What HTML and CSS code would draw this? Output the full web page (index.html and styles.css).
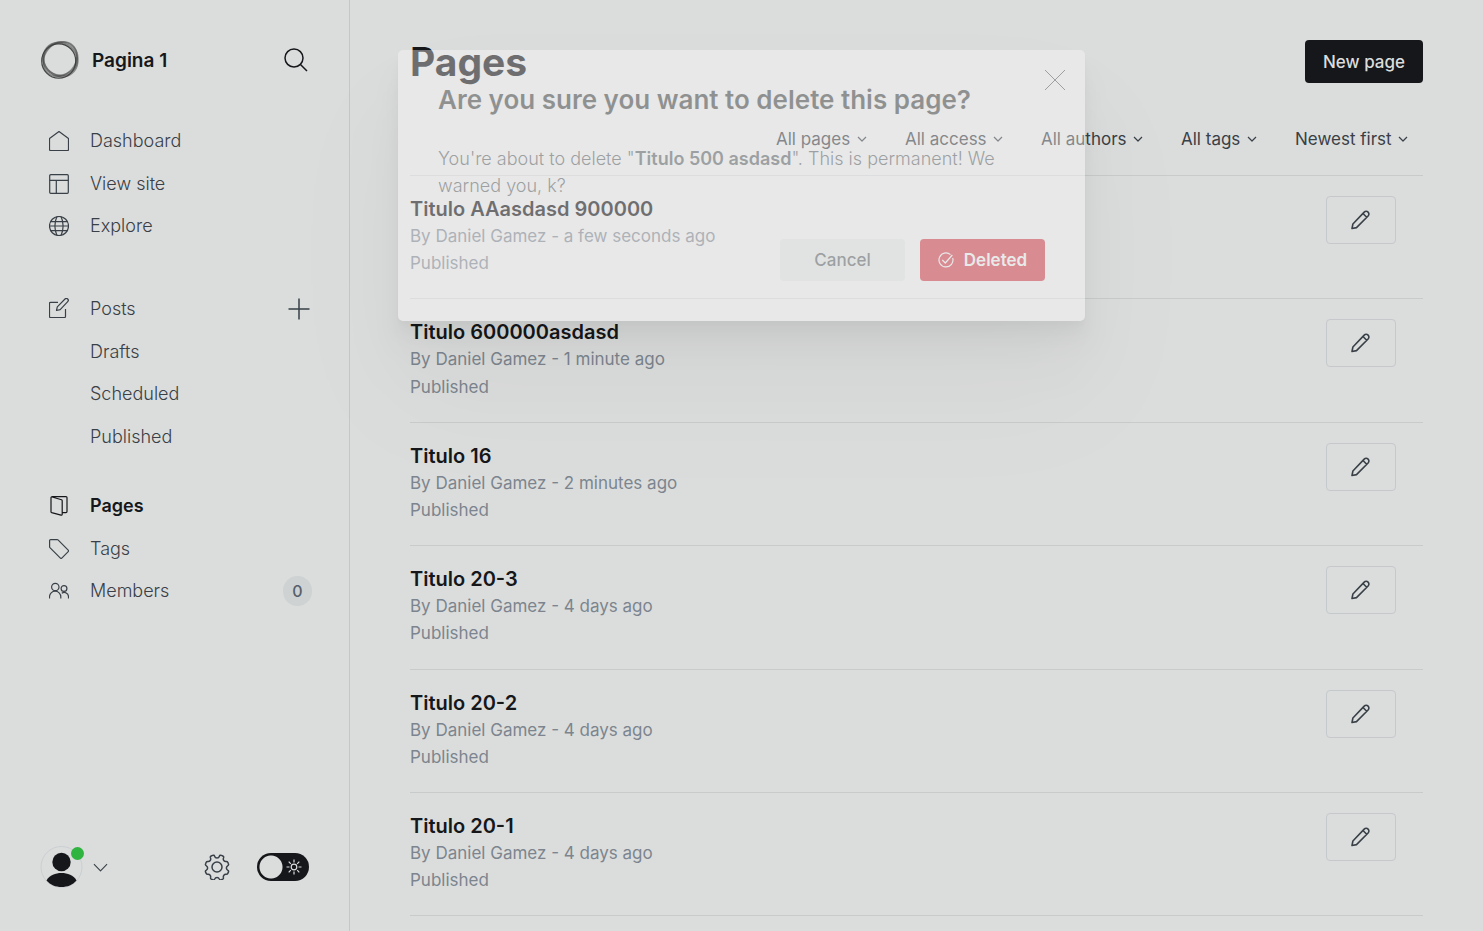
FILE: index.html
```html
<!DOCTYPE html>
<html lang="en">
<head>
<meta charset="utf-8">
<meta name="viewport" content="width=device-width, initial-scale=1">
<title>Pages - Pagina 1</title>
<link rel="stylesheet" href="styles.css">
</head>
<body>
<svg class="sprite" aria-hidden="true">
  <symbol id="pencil" viewBox="0 0 20 20"><path d="M1 18.500l.9-4.500L13.200 2.100a2.700 2.700 0 0 1 3.900 3.900L5.500 17.600zM12 3.500l3.700 3.700"/></symbol>
  <symbol id="chevron" viewBox="0 0 10 6"><path d="M1 1l4 4 4-4"/></symbol>
</svg>
<div class="app">
  <aside class="sidebar">
    <header class="brand">
      <svg class="brand-logo" viewBox="0 0 40 40" fill="none" aria-hidden="true">
        <ellipse cx="18.700" cy="21" rx="17" ry="17.200" stroke="#222" stroke-opacity=".8" stroke-width="1.200"/>
        <ellipse cx="20.800" cy="19.500" rx="18.500" ry="15.500" transform="rotate(-48 20 20)" stroke="#333" stroke-opacity=".5" stroke-width="1.600"/>
        <ellipse cx="20" cy="19.500" rx="17.800" ry="16" transform="rotate(40 20 20)" stroke="#333" stroke-opacity=".5" stroke-width="2"/>
        <ellipse cx="21" cy="19" rx="17.200" ry="16.500" transform="rotate(-20 20 20)" stroke="#444" stroke-opacity=".45" stroke-width="2"/>
      </svg>
      <span class="brand-name">Pagina 1</span>
      <button class="icon-button" type="button" aria-label="Search">
        <svg class="icon-search" viewBox="0 0 24 24"><circle cx="10" cy="10" r="9"/><path d="M16.500 16.500L23 23"/></svg>
      </button>
    </header>
    <nav class="nav">
      <ul class="nav-group">
        <li class="nav-item"><a class="nav-link" href="#"><svg class="nav-icon" viewBox="0 0 20 20"><path d="M.5 7.500L10 .6l9.500 6.900v11a1 1 0 0 1-1 1h-17a1 1 0 0 1-1-1z"/></svg>Dashboard</a></li>
        <li class="nav-item"><a class="nav-link" href="#"><svg class="nav-icon" viewBox="0 0 20 20"><rect x=".7" y=".7" width="18.600" height="18.600" rx="1"/><path d="M.7 6.300h18.600M7.300 6.300v13"/></svg>View site</a></li>
        <li class="nav-item"><a class="nav-link" href="#"><svg class="nav-icon" viewBox="0 0 20 20"><circle cx="10" cy="10" r="9.500"/><path d="M7.800.8Q4 10 7.800 19.200M12.200.8Q16 10 12.200 19.200M1.800 5.600h16.400M.5 10h19M1.800 14.600h16.400"/></svg>Explore</a></li>
      </ul>
      <ul class="nav-group">
        <li class="nav-item"><a class="nav-link" href="#"><svg class="nav-icon nav-icon-raised" viewBox="0 0 20 20"><path d="M9 4.300H1.500a1 1 0 0 0-1 1v13.200a1 1 0 0 0 1 1h14a1 1 0 0 0 1-1V11M7.500 12.500l.8-3.700L16 1a1.700 1.700 0 0 1 2.700 2.700l-7.500 7.900z"/></svg>Posts</a>
          <button class="icon-button new-post" type="button" aria-label="New post"><svg class="icon-plus" viewBox="0 0 22 22"><path d="M11 .5v21M.5 11h21"/></svg></button></li>
        <li class="nav-item"><a class="nav-link nav-sub" href="#">Drafts</a></li>
        <li class="nav-item"><a class="nav-link nav-sub" href="#">Scheduled</a></li>
        <li class="nav-item"><a class="nav-link nav-sub" href="#">Published</a></li>
      </ul>
      <ul class="nav-group">
        <li class="nav-item"><a class="nav-link nav-active" href="#" aria-current="page"><svg class="nav-icon" viewBox="0 0 20 20"><path d="M2 1.700v13.900a1 1 0 0 0 .7 1L12 19.200a1 1 0 0 0 1.200-1V4.800a1 1 0 0 0-.7-1L3.200 1a.9.900 0 0 1 .3-.4H17a1 1 0 0 1 1 1v14a1 1 0 0 1-1 1h-3.500M2 1.700a.8.800 0 0 1 1.200-.7"/></svg>Pages</a></li>
        <li class="nav-item"><a class="nav-link" href="#"><svg class="nav-icon" viewBox="0 0 20 20"><path d="M.6 1.600a1 1 0 0 1 1-1h6.700a1 1 0 0 1 .7.300l10.200 10.300a1 1 0 0 1 0 1.400l-6.400 6.500a1 1 0 0 1-1.400 0L.9 8.600a1 1 0 0 1-.3-.7z"/></svg>Tags</a></li>
        <li class="nav-item"><a class="nav-link" href="#"><svg class="nav-icon" viewBox="0 0 20 20"><circle cx="6.300" cy="6" r="3.700"/><path d="M.5 17.500v-1.700a5.500 5.500 0 0 1 11.300 0v1.700M12.800 12.200a4.300 4.300 0 0 1 6.700 3.600v1.700"/><circle cx="15" cy="7.500" r="2.900"/></svg>Members</a><span class="count">0</span></li>
      </ul>
    </nav>
    <footer class="account">
      <button class="account-menu" type="button" aria-label="Account menu">
        <span class="avatar">
          <svg class="avatar-image" viewBox="0 0 42 42"><circle cx="21" cy="21" r="20.500" fill="none" stroke="#cbcfd3"/><circle cx="21" cy="16" r="9.200" fill="#15171a"/><path d="M6 34.500C9 29 15 27 21 27s12 2 15 7.500C32 39 27 41 21 41S10 39 6 34.500z" fill="#15171a"/></svg>
          <span class="avatar-status"></span>
        </span>
        <svg class="account-chevron" viewBox="0 0 16 9"><path d="M1 1l7 7 7-7"/></svg>
      </button>
      <button class="icon-button settings" type="button" aria-label="Settings">
        <svg class="icon-gear" viewBox="0 0 26 26"><circle cx="13" cy="13" r="5"/><path d="M10.600 2.300a2.500 2.500 0 0 0 4.800 0c.3-1.100 1-1.300 2-.9l1.400.6c.9.400 1.100 1 .7 2a2.500 2.500 0 0 0 2.500 3.500c1.100-.1 1.500.1 1.900 1l.5 1.300c.4.900.1 1.500-.8 2a2.500 2.500 0 0 0 0 4.300c1 .5 1.200 1.100.8 2l-.6 1.300c-.4.900-.9 1.100-1.900.9a2.500 2.500 0 0 0-2.500 3.100c.3 1 .1 1.500-.8 1.900l-1.300.5c-.9.400-1.500.1-2-.8a2.500 2.500 0 0 0-4.600 0c-.5.900-1.100 1.200-2 .8l-1.300-.5c-.9-.4-1.100-.9-.8-1.900a2.500 2.500 0 0 0-2.500-3.100c-1 .2-1.500 0-1.900-.9l-.6-1.300c-.4-.9-.2-1.500.8-2a2.500 2.500 0 0 0 0-4.300c-.9-.5-1.200-1.100-.8-2l.5-1.300c.4-.9.800-1.100 1.900-1a2.500 2.500 0 0 0 2.500-3.500c-.4-1-.2-1.600.7-2l1.400-.6c1-.4 1.700-.2 2 .9z"/></svg>
      </button>
      <label class="theme">
        <input class="theme-input" type="checkbox" aria-label="Night shift">
        <svg class="theme-sun" viewBox="0 0 16 16"><circle cx="8" cy="8" r="2.800"/><path d="M8 .5v3M8 12.500v3M.5 8h3M12.500 8h3M2.700 2.700l2.100 2.100M11.200 11.200l2.100 2.100M2.700 13.300l2.100-2.100M11.200 4.800l2.100-2.100"/></svg>
      </label>
    </footer>
  </aside>
  <main class="main">
    <header class="page-header">
      <h1 class="page-title">Pages</h1>
      <button class="new-page" type="button">New page</button>
    </header>
    <div class="filters">
      <label class="filter"><select class="filter-select" aria-label="Type"><option>All pages</option></select><svg class="filter-chevron"><use href="#chevron"/></svg></label>
      <label class="filter"><select class="filter-select" aria-label="Access"><option>All access</option></select><svg class="filter-chevron"><use href="#chevron"/></svg></label>
      <label class="filter"><select class="filter-select" aria-label="Author"><option>All authors</option></select><svg class="filter-chevron"><use href="#chevron"/></svg></label>
      <label class="filter"><select class="filter-select" aria-label="Tag"><option>All tags</option></select><svg class="filter-chevron"><use href="#chevron"/></svg></label>
      <label class="filter"><select class="filter-select" aria-label="Sort"><option>Newest first</option></select><svg class="filter-chevron"><use href="#chevron"/></svg></label>
    </div>
    <ul class="list">
      <li class="row"><div class="row-text"><h2 class="row-title">Titulo AAasdasd 900000</h2><p class="row-meta">By Daniel Gamez - a few seconds ago</p><p class="row-meta">Published</p></div><button class="edit" type="button" aria-label="Edit"><svg class="edit-icon"><use href="#pencil"/></svg></button></li>
      <li class="row"><div class="row-text"><h2 class="row-title">Titulo 600000asdasd</h2><p class="row-meta">By Daniel Gamez - 1 minute ago</p><p class="row-meta">Published</p></div><button class="edit" type="button" aria-label="Edit"><svg class="edit-icon"><use href="#pencil"/></svg></button></li>
      <li class="row"><div class="row-text"><h2 class="row-title">Titulo 16</h2><p class="row-meta">By Daniel Gamez - 2 minutes ago</p><p class="row-meta">Published</p></div><button class="edit" type="button" aria-label="Edit"><svg class="edit-icon"><use href="#pencil"/></svg></button></li>
      <li class="row"><div class="row-text"><h2 class="row-title">Titulo 20-3</h2><p class="row-meta">By Daniel Gamez - 4 days ago</p><p class="row-meta">Published</p></div><button class="edit" type="button" aria-label="Edit"><svg class="edit-icon"><use href="#pencil"/></svg></button></li>
      <li class="row"><div class="row-text"><h2 class="row-title">Titulo 20-2</h2><p class="row-meta">By Daniel Gamez - 4 days ago</p><p class="row-meta">Published</p></div><button class="edit" type="button" aria-label="Edit"><svg class="edit-icon"><use href="#pencil"/></svg></button></li>
      <li class="row"><div class="row-text"><h2 class="row-title">Titulo 20-1</h2><p class="row-meta">By Daniel Gamez - 4 days ago</p><p class="row-meta">Published</p></div><button class="edit" type="button" aria-label="Edit"><svg class="edit-icon"><use href="#pencil"/></svg></button></li>
    </ul>
  </main>
</div>
<div class="overlay">
  <section class="modal" role="dialog" aria-labelledby="modal-title">
    <header class="modal-header">
      <h2 class="modal-title" id="modal-title">Are you sure you want to delete this page?</h2>
      <button class="modal-close" type="button" aria-label="Close"><svg class="icon-close" viewBox="0 0 20 20"><path d="M0 0l20 20M20 0L0 20"/></svg></button>
    </header>
    <p class="modal-text">You're about to delete "<strong>Titulo 500 asdasd</strong>". This is permanent! We warned you, k?</p>
    <footer class="modal-actions">
      <button class="modal-button cancel" type="button">Cancel</button>
      <button class="modal-button deleted" type="button"><svg class="icon-check" viewBox="0 0 16 16"><path d="M4.300 8l3 3 7-8M14.700 6A7 7 0 1 1 12.500 2.600"/></svg>Deleted</button>
    </footer>
  </section>
</div>
</body>
</html>
```
FILE: styles.css
```css
* { box-sizing: border-box; }
body {
  margin: 0;
  background: #dbdddc;
  color: #394047;
  font-family: Inter, "Liberation Sans", sans-serif;
  font-size: 17px;
}
ul { list-style: none; margin: 0; padding: 0; }
h1, h2, p { margin: 0; }
button, select { font: inherit; color: inherit; }
button { border: 0; padding: 0; background: none; cursor: pointer; }
svg { display: block; flex: none; fill: none; stroke: currentColor; stroke-linejoin: round; }
.sprite { position: absolute; width: 0; height: 0; }

.app { display: flex; height: 100vh; overflow: hidden; }

.sidebar {
  flex: none;
  display: flex;
  flex-direction: column;
  width: 350px;
  padding: 40px 40px 43px;
  border-right: 1px solid #c4c7c8;
}
.brand { display: flex; align-items: center; height: 40px; color: #15171a; }
.brand-logo { width: 40px; height: 40px; }
.brand-name { flex: 1; margin-left: 12px; font-size: 19px; font-weight: 600; }
.icon-button { display: flex; flex: none; }
.icon-search { width: 24px; height: 24px; margin-right: 1px; stroke-width: 1.500; }
.nav { flex: 1; margin-top: 40px; }
.nav-group { margin-bottom: 27px; }
.nav-group:first-child { margin-bottom: 40px; }
.nav-item { display: flex; align-items: center; justify-content: space-between; }
.nav-link {
  display: flex;
  align-items: center;
  gap: 21px;
  padding: 10px 0 10px 9px;
  color: #394047;
  font-size: 18px;
  font-weight: 300;
  line-height: 1.25;
  text-decoration: none;
}
.nav-sub { padding-left: 50px; }
.nav-active { color: #15171a; font-weight: 600; }
.nav-icon { width: 20px; height: 20px; stroke-width: 1.200; }
.nav-icon-raised { margin-bottom: 3px; }
.new-post { margin-right: -1px; }
.icon-plus { width: 22px; height: 22px; stroke-width: 1.500; }
.count {
  width: 29px;
  margin-right: -3px;
  border-radius: 15px;
  background: #ced2d3;
  color: #54606b;
  font-size: 16px;
  font-weight: 500;
  line-height: 30px;
  text-align: center;
}
.account { display: flex; align-items: center; }
.account-menu { display: flex; align-items: center; gap: 10px; flex: none; }
.avatar { position: relative; }
.avatar-image { width: 43px; height: 42px; stroke: none; }
.avatar-status {
  position: absolute;
  top: 1px;
  right: -1px;
  width: 13px;
  height: 13px;
  border-radius: 50%;
  background: #30b440;
}
.account-chevron { width: 15px; height: 9px; stroke-width: 1.200; }
.settings { margin-left: auto; }
.icon-gear { width: 26px; height: 26px; stroke-width: 1.500; }
.theme { position: relative; display: flex; margin-left: 27px; }
.theme-input {
  appearance: none;
  width: 52px;
  height: 28px;
  margin: 0;
  border-radius: 14px;
  background: radial-gradient(circle at 14px 14px, #dbdddc 11px, #15171a 12px);
}
.theme-sun { position: absolute; top: 6px; right: 7px; width: 16px; height: 16px; color: #dbdddc; stroke-width: 1.200; }

.main { flex: 1; min-width: 0; padding: 40px 60px; }
.page-header { display: flex; align-items: center; justify-content: space-between; height: 43px; }
.page-title { color: #15171a; font-size: 39px; font-weight: 700; line-height: 44px; }
.new-page {
  height: 43px;
  padding: 0 18px;
  border-radius: 4px;
  background: #15171a;
  color: #dbdddc;
  font-size: 17px;
  font-weight: 500;
}
.filters { display: flex; justify-content: flex-end; gap: 38px; padding: 42px 15px 22px 0; }
.filter { display: flex; align-items: center; gap: 6px; height: 28px; }
.filter-select { appearance: none; padding: 0; border: 0; background: none; font-size: 17px; }
.filter-chevron { width: 10px; height: 6px; stroke-width: 1.200; }
.list { border-top: 1px solid #c8cbcc; }
.row {
  display: flex;
  align-items: flex-start;
  justify-content: space-between;
  padding: 19px 27px 21px 0;
  border-bottom: 1px solid #c8cbcc;
}
.row-title { color: #15171a; font-size: 20px; font-weight: 600; line-height: 1.4; }
.row-meta { color: #7c858f; font-size: 17px; line-height: 1.6; }
.edit {
  display: flex;
  align-items: center;
  justify-content: center;
  width: 70px;
  height: 48px;
  margin-top: 1px;
  border: 1px solid #c5c9cc;
  border-radius: 4px;
}
.edit-icon { width: 20px; height: 20px; stroke-width: 1.600; }

.overlay { position: absolute; top: 0; left: 0; right: 0; padding-top: 50px; }
.modal {
  width: 687px;
  margin: 0 auto;
  padding: 30px 40px 40px;
  border-radius: 5px;
  background: #fefbfc;
  opacity: .38;
  box-shadow:
    0 4px 3px rgba(0, 0, 0, .03),
    0 9px 8px rgba(0, 0, 0, .04),
    0 16px 16px rgba(0, 0, 0, .05),
    0 26px 30px rgba(0, 0, 0, .06),
    0 46px 65px rgba(0, 0, 0, .06),
    0 70px 120px rgba(0, 0, 0, .06);
}
.modal-header { display: flex; justify-content: space-between; align-items: flex-start; margin-right: -20px; }
.modal-title { padding-top: 3px; color: #15171a; font-size: 26px; font-weight: 600; line-height: 34px; }
.modal-close { margin-top: -10px; }
.icon-close { width: 20px; height: 20px; }
.modal-text { margin-top: 28px; color: #394047; font-size: 18px; font-weight: 300; line-height: 27px; }
.modal-text strong { font-weight: 600; }
.modal-actions { display: flex; justify-content: flex-end; gap: 15px; margin-top: 40px; }
.modal-button {
  display: flex;
  align-items: center;
  justify-content: center;
  gap: 10px;
  min-width: 125px;
  height: 42px;
  border-radius: 4px;
  font-size: 17px;
  font-weight: 500;
}
.cancel { background: #ebeeed; }
.deleted { background: #d6071c; color: #fff; font-weight: 600; }
.icon-check { width: 16px; height: 16px; stroke-width: 1.200; }
```
